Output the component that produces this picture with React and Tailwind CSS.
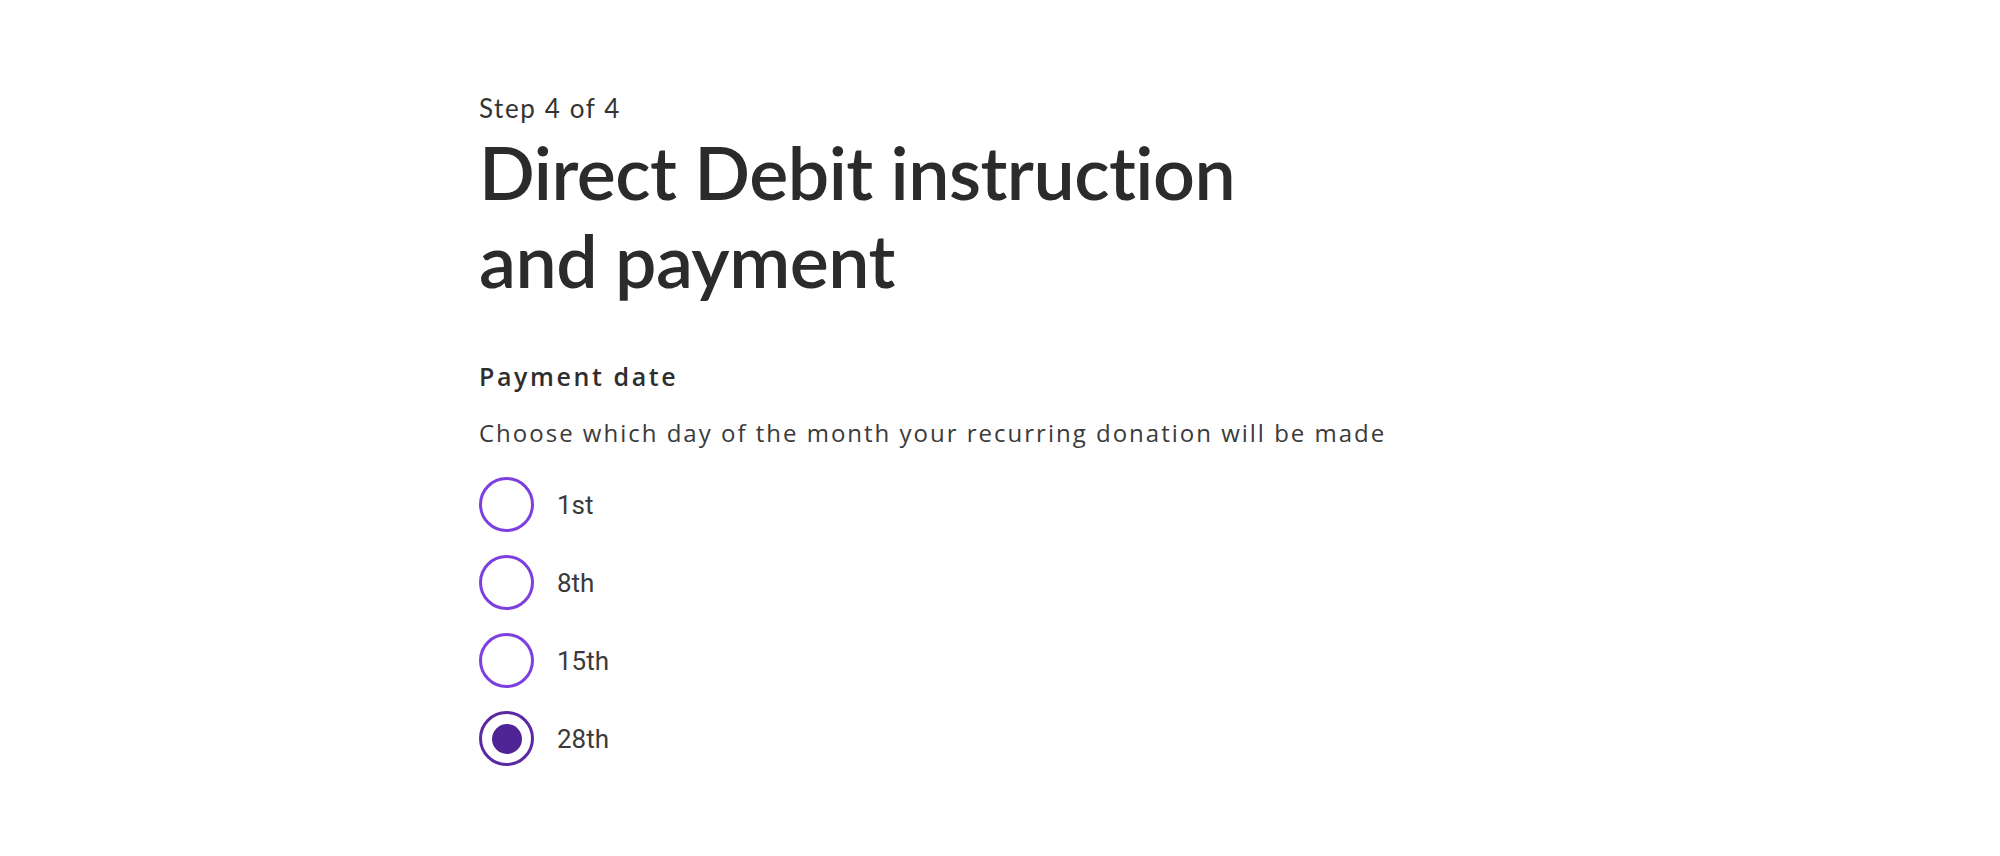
import React, { useState } from "react";

const options = ["1st", "8th", "15th", "28th"];

function Radio({ label, checked, onSelect }) {
  return (
    <label className="flex items-center gap-[23px] cursor-pointer" onClick={onSelect}>
      <span
        className={
          checked
            ? "flex h-[55px] w-[55px] shrink-0 items-center justify-center rounded-full border-[3px] border-[#5b2aa3] bg-white"
            : "flex h-[55px] w-[55px] shrink-0 items-center justify-center rounded-full border-[3px] border-[#7d3fe0] bg-white"
        }
      >
        {checked && <span className="h-[30px] w-[30px] rounded-full bg-[#4f2596]" />}
      </span>
      <span className="text-[26px] leading-[32px] text-[#3a3a3a] font-['Roboto',sans-serif]">{label}</span>
    </label>
  );
}

export default function App() {
  const [value, setValue] = useState("28th");
  return (
    <div className="min-h-screen w-full bg-white">
      <div className="mx-auto w-[1042px] pt-[92px]">
        <p className="text-[26px] leading-[32px] tracking-[1.6px] text-[#333333] font-['Lato',sans-serif]">Step 4 of 4</p>
        <h1 className="mt-[4px] text-[73.5px] leading-[88px] font-semibold tracking-[-0.5px] text-[#2b2b2b] font-['Lato',sans-serif]">
          Direct Debit instruction
          <br />
          and payment
        </h1>
        <div className="mt-[56px]">
          <p className="text-[25px] leading-[32px] font-semibold tracking-[2.6px] text-[#2e2e2e] font-['Open_Sans',sans-serif]">
            Payment date
          </p>
          <p className="mt-[25px] text-[24px] leading-[32px] tracking-[2px] text-[#3a3a3a] font-['Open_Sans',sans-serif]">
            Choose which day of the month your recurring donation will be made
          </p>
          <div className="mt-[28px] flex flex-col gap-[23px]">
            {options.map((o) => (
              <Radio key={o} label={o} checked={value === o} onSelect={() => setValue(o)} />
            ))}
          </div>
        </div>
      </div>
    </div>
  );
}
